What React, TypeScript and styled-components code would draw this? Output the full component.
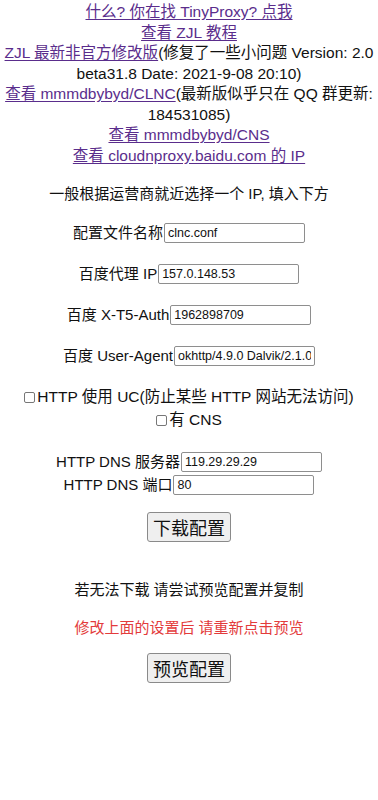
import React from 'react';
import styled, { createGlobalStyle } from 'styled-components';

const GlobalStyle = createGlobalStyle`
  html, body {
    margin: 0;
    padding: 0;
    background: #fff;
  }
  body {
    font-family: "Liberation Sans", "Noto Sans CJK SC", sans-serif;
    color: #111;
  }
`;

const Page = styled.div`
  display: flex;
  flex-direction: column;
  align-items: center;
  text-align: center;
  padding: 2px 3px 40px;
`;

const Links = styled.div`
  font-size: 15.5px;
  line-height: 20.5px;
  color: #111;
`;

const Link = styled.a`
  color: #5a2d8c;
  text-decoration: underline;
  text-underline-offset: 2px;
`;

const Para = styled.p<{ gap: number; red?: boolean }>`
  margin: ${(p) => p.gap}px 0 0;
  font-size: 15px;
  line-height: 20px;
  color: ${(p) => (p.red ? '#e33b3b' : '#111')};
`;

const FieldRow = styled.label<{ gap?: number }>`
  display: flex;
  align-items: center;
  justify-content: center;
  margin-top: ${(p) => (p.gap ?? 21)}px;
  font-size: 15px;
  line-height: 20px;
`;

const TextInput = styled.input`
  width: 141px;
  height: 20px;
  box-sizing: border-box;
  margin: 0 0 0 1px;
  padding: 0 3px;
  border: 1px solid #8e8e8e;
  border-radius: 2px;
  font-family: "Liberation Sans", "Noto Sans CJK SC", sans-serif;
  font-size: 12.5px;
  color: #111;
  background: #fff;
`;

const CheckLine = styled.label<{ first?: boolean }>`
  display: flex;
  align-items: center;
  justify-content: center;
  margin-top: ${(p) => (p.first ? '21px' : '3px')};
  font-size: 15.5px;
  line-height: 20px;
`;

const Box = styled.span`
  display: inline-block;
  width: 11px;
  height: 11px;
  border: 1px solid #777;
  border-radius: 2px;
  margin-right: 2px;
  box-sizing: border-box;
`;

const Button = styled.button<{ gap: number }>`
  margin-top: ${(p) => p.gap}px;
  height: 30px;
  padding: 0 5px;
  border: 1px solid #8a8a8a;
  border-radius: 3px;
  background: #efefef;
  font-family: "Liberation Sans", "Noto Sans CJK SC", sans-serif;
  font-size: 18px;
  color: #111;
`;

const DnsBlock = styled.div`
  display: flex;
  flex-direction: column;
  margin-top: 19px;
`;

export default function App() {
  return (
    <>
      <GlobalStyle />
      <Page>
        <Links>
          <Link href="#">什么? 你在找 TinyProxy? 点我</Link>
          <br />
          <Link href="#">查看 ZJL 教程</Link>
          <br />
          <Link href="#">ZJL 最新非官方修改版</Link>(修复了一些小问题 Version: 2.0 beta31.8 Date: 2021-9-08 20:10)
          <br />
          <Link href="#">查看 mmmdbybyd/CLNC</Link>(最新版似乎只在 QQ 群更新: 184531085)
          <br />
          <Link href="#">查看 mmmdbybyd/CNS</Link>
          <br />
          <Link href="#">查看 cloudnproxy.baidu.com 的 IP</Link>
        </Links>

        <Para gap={18}>一般根据运营商就近选择一个 IP, 填入下方</Para>

        <FieldRow gap={19}>
          配置文件名称
          <TextInput defaultValue="clnc.conf" />
        </FieldRow>
        <FieldRow>
          百度代理 IP
          <TextInput defaultValue="157.0.148.53" />
        </FieldRow>
        <FieldRow>
          百度 X-T5-Auth
          <TextInput defaultValue="1962898709" />
        </FieldRow>
        <FieldRow>
          百度 User-Agent
          <TextInput defaultValue="okhttp/4.9.0 Dalvik/2.1.0" />
        </FieldRow>

        <CheckLine first>
          <Box />
          HTTP 使用 UC(防止某些 HTTP 网站无法访问)
        </CheckLine>
        <CheckLine>
          <Box />
          有 CNS
        </CheckLine>

        <DnsBlock>
          <FieldRow gap={3}>
            HTTP DNS 服务器
            <TextInput defaultValue="119.29.29.29" />
          </FieldRow>
          <FieldRow gap={3}>
            HTTP DNS 端口
            <TextInput defaultValue="80" />
          </FieldRow>
        </DnsBlock>

        <Button gap={17}>下载配置</Button>

        <Para gap={38}>若无法下载 请尝试预览配置并复制</Para>
        <Para gap={18} red>修改上面的设置后 请重新点击预览</Para>

        <Button gap={15}>预览配置</Button>
      </Page>
    </>
  );
}
